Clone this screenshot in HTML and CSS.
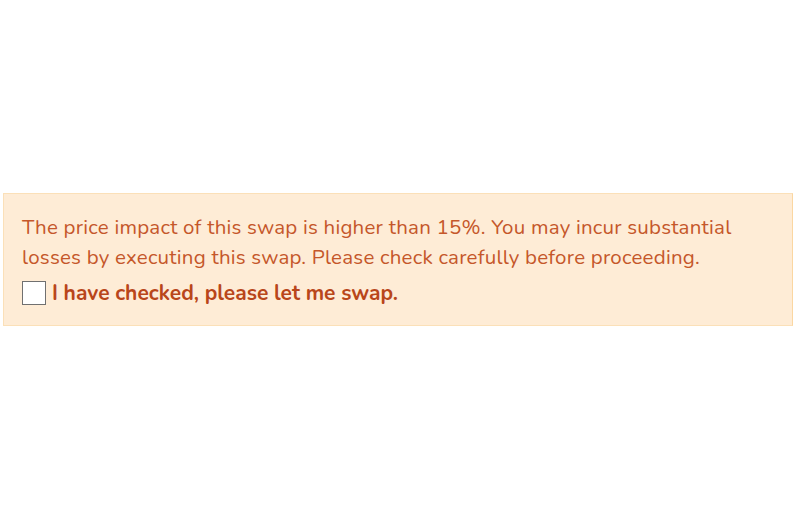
FILE: index.html
```html
<!DOCTYPE html>
<html>
<head>
<meta charset="utf-8">
<link rel="stylesheet" href="styles.css">
</head>
<body>
<div class="page">
  <div class="warning">
    <p class="message">The price impact of this swap is higher than 15%. You may incur substantial losses by executing this swap. Please check carefully before proceeding.</p>
    <label class="confirm">
      <span class="box"></span>
      <span class="label-text">I have checked, please let me swap.</span>
    </label>
  </div>
</div>
</body>
</html>
```
FILE: styles.css
```css
html, body {
  margin: 0;
  padding: 0;
  background: #ffffff;
}
body {
  font-family: "Nunito", "Lato", "Open Sans", sans-serif;
}
.page {
  padding: 193px 0 0 3px;
}
.warning {
  box-sizing: border-box;
  width: 790px;
  background: #feecd6;
  border: 1px solid #fbe0b8;
  border-right-color: #fbd7a2;
  padding: 18px 18px 18px 18px;
  color: #c5572a;
}
.message {
  margin: 0;
  font-size: 20.5px;
  line-height: 30px;
  letter-spacing: 0.22px;
  width: 740px;
}
.confirm {
  display: flex;
  align-items: center;
  gap: 6px;
  margin-top: 7px;
}
.box {
  width: 22px;
  height: 22px;
  background: #ffffff;
  border: 1px solid #707070;
  flex: none;
}
.label-text {
  font-weight: 700;
  font-size: 21px;
  color: #b9461a;
}
```
